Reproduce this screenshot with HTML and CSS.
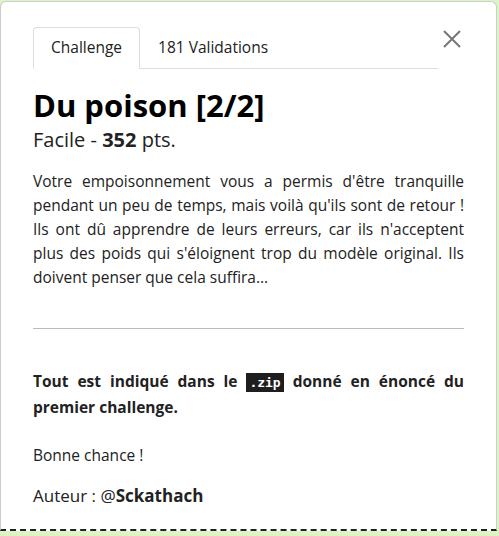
FILE: index.html
```html
<!DOCTYPE html>
<html lang="fr">
<head>
<meta charset="utf-8">
<link rel="stylesheet" href="styles.css">
</head>
<body>
<div class="modal">
  <div class="head">
    <div class="tabs">
      <div class="tab active">Challenge</div>
      <div class="tab">181 Validations</div>
    </div>
    <button class="close" aria-label="Fermer">
      <svg width="18" height="18" viewBox="0 0 18 18"><path d="M1 1L17 17M17 1L1 17" stroke="#777" stroke-width="2" fill="none"/></svg>
    </button>
  </div>
  <h1 class="title">Du poison [2/2]</h1>
  <div class="meta">Facile - <b>352</b> pts.</div>
  <p class="desc">Votre empoisonnement vous a permis d'être tranquille pendant un peu de temps, mais voilà qu'ils sont de retour ! Ils ont dû apprendre de leurs erreurs, car ils n'acceptent plus des poids qui s'éloignent trop du modèle original. Ils doivent penser que cela suffira...</p>
  <hr class="sep">
  <p class="note"><b>Tout est indiqué dans le <code>.zip</code> donné en énoncé du premier challenge.</b></p>
  <p class="luck">Bonne chance !</p>
  <p class="author">Auteur : @<b>Sckathach</b></p>
</div>
</body>
</html>
```
FILE: styles.css
```css
html, body { margin: 0; padding: 0; }
body {
  background: #dcf5c4;
  font-family: "Open Sans", "Noto Sans", sans-serif;
  color: #222;
  height: 536px;
  overflow: hidden;
}
.modal {
  margin: 1px 2px 0 0;
  height: 530px;
  box-sizing: border-box;
  background: #fff;
  border: 1px solid #ccc;
  border-bottom: 2px dashed #222;
  border-radius: 6px 6px 0 0;
  padding: 25px 32px 0 32px;
}
.head { display: flex; align-items: flex-start; }
.tabs {
  display: flex;
  flex: 1;
  border-bottom: 1px solid #ddd;
}
.tab {
  padding: 9px 17px 10px;
  font-size: 15.5px;
  line-height: 21px;
  border: 1px solid transparent;
  border-radius: 4px 4px 0 0;
  margin-bottom: -1px;
  color: #222;
}
.tab.active { border-color: #ddd #ddd #fff; background: #fff; }
.close {
  background: none; border: 0; padding: 0; margin: 3px 3px 0 5px;
  width: 18px; height: 18px; cursor: pointer;
}
.title {
  margin: 17px 0 0;
  font-size: 31px;
  line-height: 38px;
  font-weight: 700;
  color: #000;
}
.meta { font-size: 20px; line-height: 26px; margin-top: 3px; }
.desc {
  margin: 16px 0 0;
  font-size: 15.5px;
  line-height: 24px;
  text-align: justify;
}
.sep { border: 0; border-top: 1px solid #bbb; margin: 39px 0 0; }
.note {
  margin: 40px 0 0;
  font-size: 15.5px; line-height: 24px; text-align: justify;
}
code {
  font-family: "DejaVu Sans Mono", monospace;
  background: #1e1e1e; color: #fff; font-weight: 700;
  font-size: 13px; padding: 2px 3px;
}
.luck { margin: 24px 0 0; font-size: 15.5px; line-height: 24px; }
.author { margin: 16px 0 0; font-size: 17px; line-height: 26px; }
.author b { font-weight: 700; }
```
